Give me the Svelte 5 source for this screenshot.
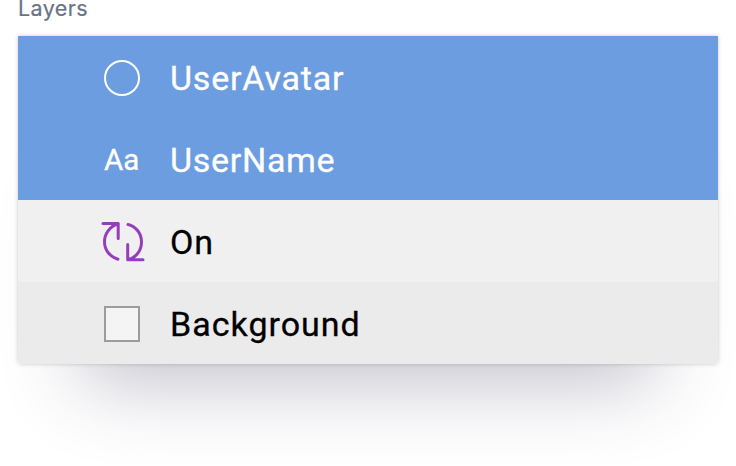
<script>
  const layers = [
    { name: 'UserAvatar', icon: 'oval', selected: true, spacing: 0.8 },
    { name: 'UserName', icon: 'text', selected: true, spacing: 0.7 },
    { name: 'On', icon: 'symbol', selected: false, spacing: 0.8 },
    { name: 'Background', icon: 'shape', selected: false, spacing: 1 },
  ];
</script>

<main>
  <h2>Layers</h2>
  <ul class="panel">
    {#each layers as layer (layer.name)}
      <li class:selected={layer.selected} class={layer.icon}>
        <span class="icon">
          {#if layer.icon === 'oval'}
            <svg width="44" height="44" viewBox="0 0 44 44"><circle cx="22" cy="22" r="17" /></svg>
          {:else if layer.icon === 'text'}
            <span class="glyph">Aa</span>
          {:else if layer.icon === 'symbol'}
            <svg width="44" height="44" viewBox="0 0 44 44">
              <path d="M3 3.500H18.200V18.500M18.200 3.500C9.500 6.500 4.500 14 4.500 21.700C4.500 30 10 37 18 39.200" />
              <path d="M43 39.700H27.700V24.500M27.700 39.700C37 37.500 41.500 30 41.500 21.700C41.500 13.500 36 6.500 28 4.500" />
            </svg>
          {:else}
            <svg width="44" height="44" viewBox="0 0 44 44"><rect x="5" y="5" width="34" height="34" /></svg>
          {/if}
        </span>
        <span class="name" style="letter-spacing: {layer.spacing}px">{layer.name}</span>
      </li>
    {/each}
  </ul>
</main>

<style>
  :global(body) {
    margin: 0;
    background: #fff;
    overflow: hidden;
  }
  main {
    box-sizing: border-box;
    height: 466px;
    padding: 0 18px;
    overflow: hidden;
    font-family: Roboto, "Liberation Sans", sans-serif;
  }
  h2 {
    height: 36px;
    margin: 0;
    color: #697386;
    font-family: Inter, "Liberation Sans", sans-serif;
    font-size: 21.500px;
    font-weight: 400;
    line-height: 16px;
    letter-spacing: 0.4px;
    -webkit-text-stroke: 0.2px currentColor;
  }
  .panel {
    margin: 0;
    padding: 0;
    list-style: none;
    border-radius: 0 0 3px 3px;
    box-shadow:
      0 0 4px rgba(0, 0, 0, 0.2),
      0 82px 80px -64px rgba(50, 45, 80, 0.3);
  }
  li {
    box-sizing: border-box;
    display: flex;
    align-items: center;
    height: 82px;
    padding: 2px 0 0 82px;
    color: #000;
    background: #f0f0f0;
  }
  li.selected {
    color: #fff;
    background: #6c9de0;
  }
  li.shape {
    background: #ebebeb;
    border-radius: 0 0 3px 3px;
  }
  .icon {
    display: flex;
    flex: none;
    width: 70px;
    height: 44px;
    align-items: center;
  }
  svg {
    fill: none;
    stroke: #fff;
    stroke-width: 2;
    overflow: visible;
  }
  .symbol svg {
    stroke: #963dbb;
    stroke-width: 3;
    stroke-linecap: round;
    stroke-linejoin: round;
  }
  .shape svg {
    fill: #f4f4f4;
    stroke: #9c9c9c;
  }
  .glyph {
    padding-left: 4px;
    font-size: 29.500px;
    line-height: 44px;
    -webkit-text-stroke: 0.3px currentColor;
  }
  .name {
    font-size: 34px;
    line-height: 44px;
    white-space: nowrap;
    -webkit-text-stroke: 0.3px currentColor;
  }
</style>
